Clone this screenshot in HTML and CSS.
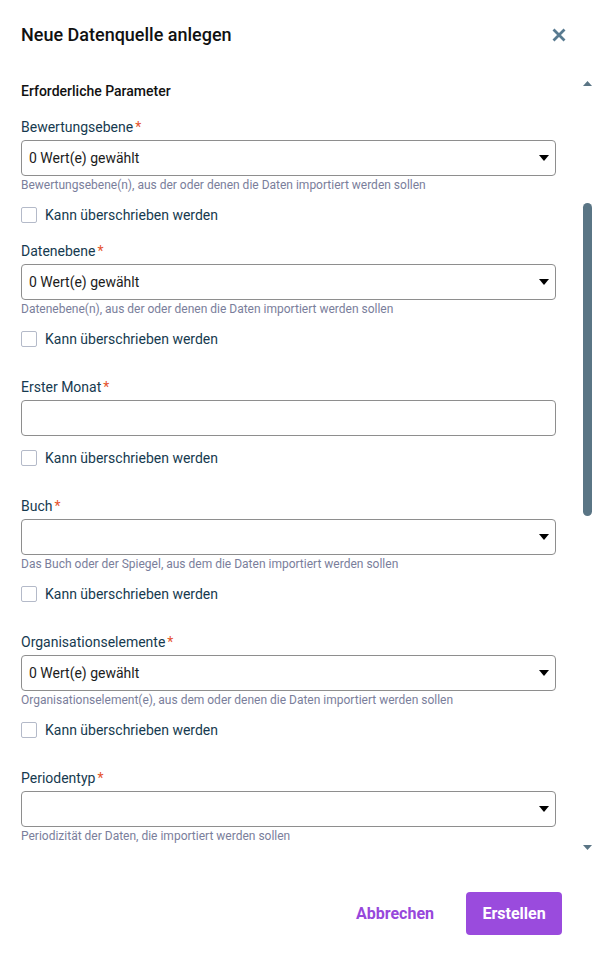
FILE: index.html
```html
<!DOCTYPE html>
<html lang="de">
<head>
<meta charset="utf-8">
<title>Neue Datenquelle anlegen</title>
<link rel="stylesheet" href="styles.css">
</head>
<body>
<div class="dialog">
  <header class="dialog-header">
    <h1 class="dialog-title">Neue Datenquelle anlegen</h1>
    <button class="close-btn" aria-label="Schließen">
      <svg width="14" height="14" viewBox="0 0 14 14"><path d="M1.5 1.5 L12.5 12.5 M12.5 1.5 L1.5 12.5" stroke="#587a90" stroke-width="2.8" stroke-linecap="butt" fill="none"/></svg>
    </button>
  </header>

  <div class="scroll-area">
    <div class="scroll-content">
      <h2 class="section-title">Erforderliche Parameter</h2>

      <div class="field">
        <div class="field-label">Bewertungsebene<span class="req">*</span></div>
        <div class="select"><span class="select-value">0 Wert(e) gewählt</span><span class="caret"></span></div>
        <div class="hint">Bewertungsebene(n), aus der oder denen die Daten importiert werden sollen</div>
        <label class="check-row"><span class="checkbox"></span><span class="check-label">Kann überschrieben werden</span></label>
      </div>

      <div class="field field-tight">
        <div class="field-label">Datenebene<span class="req">*</span></div>
        <div class="select"><span class="select-value">0 Wert(e) gewählt</span><span class="caret"></span></div>
        <div class="hint">Datenebene(n), aus der oder denen die Daten importiert werden sollen</div>
        <label class="check-row"><span class="checkbox"></span><span class="check-label">Kann überschrieben werden</span></label>
      </div>

      <div class="field">
        <div class="field-label">Erster Monat<span class="req">*</span></div>
        <div class="input"></div>
        <label class="check-row"><span class="checkbox"></span><span class="check-label">Kann überschrieben werden</span></label>
      </div>

      <div class="field">
        <div class="field-label">Buch<span class="req">*</span></div>
        <div class="select"><span class="select-value"></span><span class="caret"></span></div>
        <div class="hint">Das Buch oder der Spiegel, aus dem die Daten importiert werden sollen</div>
        <label class="check-row"><span class="checkbox"></span><span class="check-label">Kann überschrieben werden</span></label>
      </div>

      <div class="field">
        <div class="field-label">Organisationselemente<span class="req">*</span></div>
        <div class="select"><span class="select-value">0 Wert(e) gewählt</span><span class="caret"></span></div>
        <div class="hint">Organisationselement(e), aus dem oder denen die Daten importiert werden sollen</div>
        <label class="check-row"><span class="checkbox"></span><span class="check-label">Kann überschrieben werden</span></label>
      </div>

      <div class="field">
        <div class="field-label">Periodentyp<span class="req">*</span></div>
        <div class="select"><span class="select-value"></span><span class="caret"></span></div>
        <div class="hint">Periodizität der Daten, die importiert werden sollen</div>
      </div>
    </div>

    <div class="scrollbar">
      <div class="sb-btn sb-up"><svg width="9" height="5" viewBox="0 0 9 5"><path d="M4.5 0 L9 5 L0 5 Z" fill="#5a7585"/></svg></div>
      <div class="sb-track"><div class="sb-thumb"></div></div>
      <div class="sb-btn sb-down"><svg width="9" height="5" viewBox="0 0 9 5"><path d="M0 0 L9 0 L4.5 5 Z" fill="#5a7585"/></svg></div>
    </div>
  </div>

  <footer class="dialog-footer">
    <button class="btn btn-text">Abbrechen</button>
    <button class="btn btn-primary">Erstellen</button>
  </footer>
</div>
</body>
</html>
```

FILE: styles.css
```css
* { box-sizing: border-box; }

html, body {
  margin: 0;
  padding: 0;
  height: 100%;
  background: #ffffff;
}

body {
  font-family: Roboto, "Liberation Sans", Arial, sans-serif;
  color: #1c1c1c;
  overflow: hidden;
}

.dialog {
  height: 100vh;
  display: flex;
  flex-direction: column;
  background: #fff;
}

.dialog-header {
  display: flex;
  align-items: center;
  justify-content: space-between;
  padding: 24px 26px 30px 21px;
  flex: none;
}

.dialog-title {
  margin: 0;
  font-size: 18px;
  line-height: 22px;
  font-weight: 500;
  color: #111111;
}

.close-btn {
  border: 0;
  background: none;
  padding: 0;
  width: 14px;
  height: 14px;
  display: flex;
  cursor: pointer;
}

.scroll-area {
  flex: 1;
  min-height: 0;
  display: flex;
}

.scroll-content {
  flex: 1;
  min-width: 0;
  overflow: hidden;
  padding: 5px 27px 0 21px;
}

.section-title {
  margin: 0;
  font-size: 14px;
  line-height: 20px;
  font-weight: 500;
  color: #111111;
}

.field { margin-top: 28px; }
.field:first-of-type { margin-top: 16px; }
.field-tight { margin-top: 16px; }

.field-label {
  font-size: 14px;
  line-height: 20px;
  color: #163a4f;
  margin-bottom: 3px;
}

.req {
  color: #e5532d;
  margin-left: 2px;
}

.select, .input {
  height: 36px;
  border: 1px solid #8e8e8e;
  border-radius: 4px;
  display: flex;
  align-items: center;
  padding: 0 6px 0 7px;
  background: #fff;
}

.select-value {
  flex: 1;
  font-size: 14px;
  color: #1c1c1c;
}

.caret {
  width: 0;
  height: 0;
  border-left: 5px solid transparent;
  border-right: 5px solid transparent;
  border-top: 6px solid #000;
}

.hint {
  margin-top: 1px;
  font-size: 12px;
  line-height: 16px;
  color: #7a7e9b;
}

.check-row {
  margin-top: 12px;
  height: 20px;
  display: flex;
  align-items: center;
  gap: 8px;
}

.checkbox {
  width: 16px;
  height: 16px;
  border: 1px solid #b4bac9;
  border-radius: 2px;
  background: #fff;
  flex: none;
}

.check-label {
  font-size: 14px;
  color: #163a4f;
}

.scrollbar {
  flex: none;
  width: 9px;
  display: flex;
  flex-direction: column;
}

.sb-btn {
  height: 15px;
  display: flex;
  justify-content: center;
  flex: none;
}

.sb-up { align-items: center; }
.sb-down { align-items: flex-start; padding-top: 4px; }

.sb-track { flex: 1; }

.sb-thumb {
  margin-top: 112px;
  height: 313px;
  border-radius: 5px;
  background: #5a7585;
}

.dialog-footer {
  flex: none;
  display: flex;
  justify-content: flex-end;
  gap: 16px;
  padding: 36px 30px 30px 21px;
}

.btn {
  height: 43px;
  border: 0;
  border-radius: 4px;
  font-family: Roboto, "Liberation Sans", Arial, sans-serif;
  font-size: 16px;
  font-weight: 700;
  padding: 0 16px;
  cursor: pointer;
}

.btn-text {
  background: transparent;
  color: #9747db;
}

.btn-primary {
  background: #9a4bdd;
  color: #ffffff;
  width: 96px;
}
```
